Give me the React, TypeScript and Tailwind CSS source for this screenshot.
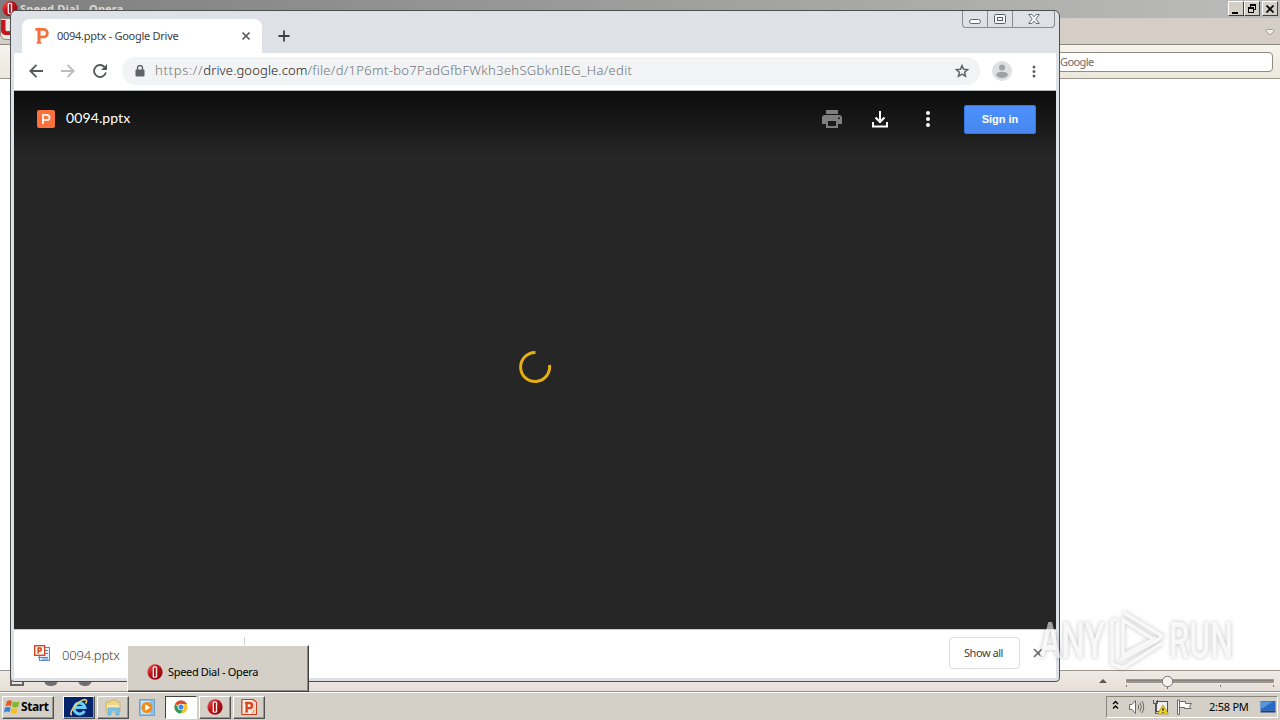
import type { ReactNode } from 'react';
import clsx from 'clsx';

const UI_FONT = "font-['Noto_Sans','Liberation_Sans',sans-serif]";

function OperaIcon({ className }: { className?: string }) {
  return (
    <svg viewBox="0 0 16 16" className={className}>
      <defs>
        <linearGradient id="opera" x1="0" y1="0" x2="1" y2="1">
          <stop offset="0" stopColor="#ef6b6b" />
          <stop offset="0.4" stopColor="#c4161c" />
          <stop offset="1" stopColor="#7d0308" />
        </linearGradient>
      </defs>
      <ellipse cx="8" cy="8" rx="7.6" ry="7.8" fill="url(#opera)" />
      <rect x="5.6" y="2.2" width="4.6" height="11.6" rx="1.6" fill="#f6e9e9" />
      <rect x="7" y="3.4" width="1.8" height="9.4" rx="0.8" fill="#a30d12" />
    </svg>
  );
}

function PowerPointIcon({ className }: { className?: string }) {
  return (
    <svg viewBox="0 0 16 16" className={className}>
      <path d="M1 0.5H12L15.5 3V15.5H1Z" fill="#f6d4c6" stroke="#c8401a" />
      <path d="M1 1H10V15H1Z" fill="#fdf1ec" />
      <path d="M1 0.5H12L15.5 3V15.5H1Z" fill="none" stroke="#c8401a" />
      <path d="M5.6 13V4H8.4A2.6 2.6 0 0 1 8.4 9.2H5.6" fill="none" stroke="#d8441b" strokeWidth="2.3" />
      <path d="M3.8 13H7.4M3.8 3.9H6" stroke="#d8441b" strokeWidth="1.2" />
      <path d="M11.5 14 13.5 11" stroke="#e58a6c" />
    </svg>
  );
}

function ClassicButton({ children }: { children: ReactNode }) {
  return (
    <div className="flex h-[15px] w-4 items-center justify-center border border-t-white border-r-[#404040] border-b-[#404040] border-l-white bg-[#d4d0c8]">
      {children}
    </div>
  );
}

function TaskButton({ children, active, className }: { children: ReactNode; active?: boolean; className?: string }) {
  return (
    <div
      className={clsx(
        'flex h-[23px] w-8 items-center justify-center border',
        active
          ? 'border-t-[#404040] border-r-white border-b-white border-l-[#404040] bg-white'
          : 'border-t-white border-r-[#505050] border-b-[#505050] border-l-white shadow-[inset_-1px_-1px_#9a968f]',
        className,
      )}
    >
      {children}
    </div>
  );
}

function OperaWindow() {
  return (
    <div className="flex h-[692px] flex-col bg-white">
      {/* Title bar */}
      <div className="flex h-[18px] items-start justify-between overflow-hidden bg-linear-to-r from-[#7f7f7f] to-[#bcbcba]">
        <div className="flex">
          <OperaIcon className="ml-0.5 h-[17px] w-4" />
          <span className="ml-0.5 text-[11px] leading-[17px] font-bold tracking-[0.2px] text-[#dcd9d2]">Speed Dial - Opera</span>
        </div>
        <div className="mt-px mr-0.5 flex">
          <ClassicButton>
            <span className="mt-2 mr-0.5 h-0.5 w-1.5 bg-black" />
          </ClassicButton>
          <ClassicButton>
            <svg width="10" height="10" viewBox="0 0 10 10" fill="none" stroke="#000" shapeRendering="crispEdges">
              <path d="M3 1.5H9M3 0.5H9M3.5 1V3M8.5 1V6M7 5.5H9" />
              <path d="M1 4.5H7M1 3.5H7M1.5 4V9M6.5 4V9M1 8.5H7" />
            </svg>
          </ClassicButton>
          <div className="ml-0.5">
            <ClassicButton>
              <svg width="8" height="8" viewBox="0 0 8 8" stroke="#000" strokeWidth="1.7">
                <path d="M0.5 0.5 7.5 7.5M7.5 0.5 0.5 7.5" />
              </svg>
            </ClassicButton>
          </div>
        </div>
      </div>
      {/* Tab bar */}
      <div className="flex h-[27px] items-start justify-between border-b border-[#8d897f] bg-[#d4cec7]">
        <div className="h-[22px] w-9 rounded-bl-md border border-[#8d897f] bg-[#ece8e2]">
          <svg width="12" height="18" viewBox="0 0 12 18">
            <path d="M0 1H4.5V11Q5 13 8 12H12V16H5Q0 16 0 11Z" fill="#c4161c" />
          </svg>
        </div>
        <svg width="10" height="7" viewBox="0 0 10 7" fill="#f0eeea" stroke="#a19c95" className="mt-[11px] mr-[5px]">
          <path d="M0.5 1.5 2.5 0.5H7.5L9.5 1.5 5 6Z" />
        </svg>
      </div>
      {/* Search field */}
      <div className="flex h-[34px] items-center justify-end border-b border-[#9a958a] bg-linear-to-b from-[#f6f4ed] to-[#ebe7dd] pr-[7px]">
        <div className="h-5 w-[240px] rounded border border-[#8f8c84] bg-white pl-[26px] text-[11px] leading-[18px] tracking-[-0.6px] text-[#6b6b6b]">Google</div>
      </div>
      <div className="flex-1" />
      {/* Status bar */}
      <div className="flex h-[22px] items-center justify-between border-t border-b border-[#97938c] bg-linear-to-b from-[#f0ebe5] to-[#e6dfd7]">
        <div className="-mt-1 flex items-start pl-2.5">
          <div className="h-3.5 w-3.5 border-2 border-[#666]" />
          <div className="ml-5 h-3.5 w-3.5 rounded-md bg-[#707070]" />
          <div className="ml-5 h-3.5 w-3.5 rounded-md border-4 border-[#707070]" />
        </div>
        <svg width="182" height="20" viewBox="0 0 182 20">
          <path d="M1 12 5 8 9 12Z" fill="#5b5752" />
          <rect x="28" y="8.5" width="148" height="3.5" rx="1.5" fill="#9b968f" />
          <path d="M28 9H176" stroke="#76716b" />
          <path d="M28.5 14V16M69.5 14V18M122.5 14V16M175.5 14V16" stroke="#77726c" />
          <circle cx="69.5" cy="10.5" r="5.2" fill="#f6f3f0" stroke="#77736e" />
        </svg>
      </div>
    </div>
  );
}

function Taskbar() {
  return (
    <div className="flex h-7 items-center border-t border-white bg-[#d4d0c8] pt-px">
      <div className="ml-0.5 flex h-[23px] w-[52px] items-center border border-t-white border-r-[#505050] border-b-[#505050] border-l-white shadow-[inset_-1px_-1px_#9a968f]">
        <svg width="16" height="15" viewBox="0 0 16 15" className="ml-px">
          <path d="M3 1Q6 -0.3 8 1L7 6Q4 5 1.5 6.5Z" fill="#e85a21" />
          <path d="M9 1.5Q12 3 15.5 1.5L14 7Q11 8 8 6.5Z" fill="#7fb928" />
          <path d="M1 7.7Q4 6.2 6.7 7.5L5.6 12Q3 11 0 12.5Z" fill="#2f82d8" />
          <path d="M7.8 8Q11 9.5 14 8.2L12.5 13Q9.5 14.5 6.5 12.5Z" fill="#f6bd25" />
        </svg>
        <span className="ml-px text-[12px] leading-none font-bold tracking-[-0.4px] text-black">Start</span>
      </div>

      <TaskButton className="ml-[9px] bg-[#03246c]">
        <svg width="30" height="21" viewBox="0 0 30 21" fill="none">
          <path d="M20.5 14A5.5 5.5 0 1 1 21 10.5H11" stroke="#6ccdf8" strokeWidth="3" />
          <path d="M8 18Q5 17 10 10Q16 3 21 2.5Q24 3 21.5 6.5" stroke="#f0d45e" strokeWidth="1.5" />
        </svg>
      </TaskButton>
      <TaskButton className="ml-0.5">
        <svg width="18" height="17" viewBox="0 0 18 17">
          <path d="M2 3H6L7 1H12L13 3H16V13H2Z" fill="#efd68b" stroke="#c9a94e" strokeWidth="0.7" />
          <path d="M3 6H15V13H3Z" fill="#f7e9b5" />
          <path d="M4 9H15V16H12V12H7V16H4Z" fill="#7cc4e8" stroke="#5ba3cb" strokeWidth="0.7" />
        </svg>
      </TaskButton>
      <svg width="16" height="17" viewBox="0 0 16 17" className="ml-2.5">
        <rect x="0.5" y="0.5" width="15" height="16" fill="#8fc0e8" stroke="#6fa3cf" />
        <rect x="2" y="2" width="9" height="13" fill="#c5e0f5" />
        <circle cx="8" cy="8.5" r="5.5" fill="#ef8b16" />
        <path d="M6.2 5.2 11.3 8.5 6.2 11.8Z" fill="#fff" />
      </svg>
      <TaskButton active className="ml-2.5">
        <svg width="14" height="14" viewBox="0 0 16 16" className="-ml-px">
          <circle cx="8" cy="8" r="7.5" fill="#f5c32c" />
          <path d="M8 8 1.5 4.2A7.5 7.5 0 0 1 14.7 4.6L8 4.6Z" fill="#dc4437" />
          <path d="M1.5 4.2A7.5 7.5 0 0 0 7.5 15.5L11 9.8 5 9.8Z" fill="#2a9c57" />
          <circle cx="8" cy="8" r="3.7" fill="#fff" />
          <circle cx="8" cy="8" r="2.9" fill="#4384ef" />
        </svg>
      </TaskButton>
      <TaskButton className="ml-0.5">
        <OperaIcon className="-ml-px h-4 w-4" />
      </TaskButton>
      <TaskButton className="ml-0.5">
        <PowerPointIcon className="h-4 w-4" />
      </TaskButton>

      {/* Tray */}
      <div className="mr-0.5 ml-auto flex h-[22px] w-[172px] items-center border border-t-[#8a867e] border-r-white border-b-white border-l-[#8a867e]">
        <svg width="7" height="10" viewBox="0 0 7 10" fill="none" stroke="#000" strokeWidth="1.4" className="-mt-1 ml-[5px]">
          <path d="M1 4 3.5 1.5 6 4M1 8.5 3.5 6 6 8.5" />
        </svg>
        <svg width="17" height="16" viewBox="0 0 17 16" fill="none" stroke="#6d6a66" className="ml-[9px]">
          <path d="M1.5 5.5H4L7.5 1.5V14.5L4 10.5H1.5Z" fill="#fff" />
          <path d="M10 5.5Q11.5 8 10 10.5M12 3.5Q14.5 8 12 12.5M14 2Q17.5 8 14 14" />
        </svg>
        <svg width="17" height="16" viewBox="0 0 17 16" className="ml-[7px]">
          <rect x="4.5" y="2.5" width="11" height="10" fill="#eee" stroke="#55524d" />
          <path d="M1.5 1V4.5H5.5V1M3.5 4.5V14.5H7" fill="none" stroke="#55524d" />
          <path d="M11 6 16.5 15H5.5Z" fill="#f7d51d" stroke="#a58a10" strokeWidth="0.7" />
          <path d="M11 9V12M11 13V14" stroke="#222" strokeWidth="1.2" />
        </svg>
        <svg width="17" height="16" viewBox="0 0 17 16" fill="#fff" stroke="#6d6a66" className="ml-[7px]">
          <path d="M1.5 1V15.5H3.5V1ZM3.5 2.5H9.5V4.5H15.5L13.5 7.5 15 9.5H8.5V8.5H3.5Z" />
        </svg>
        <span className="-mt-px ml-4 text-[11px] leading-none tracking-[-0.25px] whitespace-nowrap text-black">2:58 PM</span>
        <svg width="16" height="14" viewBox="0 0 16 14" className="mr-px ml-auto">
          <path d="M0.5 1H15.5V10.5H0.5Z" fill="#2769c6" />
          <path d="M1 1.5H13L3 8H1Z" fill="#5794df" />
          <path d="M0.5 10.5H15.5V12.5H0.5Z" fill="#173d84" />
        </svg>
      </div>
    </div>
  );
}

function TabStrip() {
  return (
    <div className="flex h-[42px] items-end bg-[#dee1e6]">
      <div className="ml-2 flex h-[34px] w-60 items-center rounded-t-lg bg-white pl-[13px]">
        <svg width="14" height="16" viewBox="0 0 14 16" fill="none" stroke="#f76d3b">
          <path d="M4 1.2V14.8" strokeWidth="3" />
          <path d="M0.5 1.4H8.6A3.5 3.5 0 0 1 8.6 9H4" strokeWidth="2.7" />
          <path d="M1.8 14.8H6.2" strokeWidth="1.8" />
        </svg>
        <span className="ml-2 text-[11px] tracking-[-0.27px] whitespace-nowrap text-[#3c4043]">0094.pptx - Google Drive</span>
        <svg width="8" height="8" viewBox="0 0 8 8" stroke="#5f6368" strokeWidth="1.6" className="mr-3 ml-auto">
          <path d="M0.5 0.5 7.5 7.5M7.5 0.5 0.5 7.5" />
        </svg>
      </div>
      <svg width="12" height="12" viewBox="0 0 12 12" stroke="#3c4043" strokeWidth="1.8" className="mb-[11px] ml-4">
        <path d="M6 0.5V11.5M0.5 6H11.5" />
      </svg>
      {/* Window buttons */}
      <div className="mr-px mb-auto ml-auto flex h-[17px] w-[93px] items-center rounded-b border border-t-0 border-[#878b92]">
        <div className="flex h-full w-[25px] items-end justify-center border-r border-[#878b92] pb-[3px]">
          <div className="h-[5px] w-3 rounded-sm border border-[#5d626a] bg-white" />
        </div>
        <div className="flex h-full w-[25px] items-center justify-center border-r border-[#878b92]">
          <svg width="12" height="10" viewBox="0 0 12 10" fill="#f4f5f7" stroke="#5d626a">
            <rect x="0.5" y="0.5" width="11" height="9" rx="1" />
            <rect x="3.5" y="3.5" width="5" height="3" />
          </svg>
        </div>
        <div className="flex flex-1 justify-center">
          <svg width="12" height="10" viewBox="0 0 12 10" fill="#f8f8fa" stroke="#5d626a" strokeWidth="0.9">
            <path d="M0.7 0.5H4L6 2.8 8 0.5H11.3L7.8 5 11.3 9.5H8L6 7.2 4 9.5H0.7L4.2 5Z" />
          </svg>
        </div>
      </div>
    </div>
  );
}

function AddressBar() {
  return (
    <div className="flex h-[38px] items-center border-b border-[#b4b6b9] bg-white">
      <svg width="14" height="14" viewBox="0 0 14 14" fill="none" stroke="#55595e" strokeWidth="1.9" className="-mt-0.5 ml-[15px]">
        <path d="M14 7H1.5M7.5 0.8 1.3 7 7.5 13.2" />
      </svg>
      <svg width="14" height="14" viewBox="0 0 14 14" fill="none" stroke="#babcbe" strokeWidth="1.9" className="-mt-0.5 ml-[18px]">
        <path d="M0 7H12.5M6.5 0.8 12.7 7 6.5 13.2" />
      </svg>
      <svg width="14" height="14" viewBox="0 0 14 14" fill="none" stroke="#55595e" strokeWidth="1.9" className="-mt-0.5 ml-[18px]">
        <path d="M12.9 8.5A6 6 0 1 1 11.4 2.8" />
        <path d="M14 0V6H8Z" fill="#55595e" stroke="none" />
      </svg>
      <div className="-mt-0.5 ml-[15px] flex h-7 w-[858px] items-center rounded-full bg-[#f1f3f4] pl-3">
        <svg width="10" height="12" viewBox="0 0 10 12" className="ml-px">
          <rect x="0.5" y="4.5" width="9" height="7" rx="1" fill="#5f6368" />
          <path d="M2.5 5V3A2.5 2.5 0 0 1 7.5 3V5" fill="none" stroke="#5f6368" strokeWidth="1.4" />
        </svg>
        <span className="mt-px ml-2.5 text-[13px] font-light tracking-[0.31px] whitespace-nowrap text-[#70757a]">
          <span className="tracking-[0.7px]">https://</span>
          <span className="tracking-[0.13px] text-[#202124]">drive.google.com</span>/file/d/1P6mt-bo7PadGfbFWkh3ehSGbknIEG_Ha/edit
        </span>
        <svg width="14" height="14" viewBox="0 0 14 14" fill="none" stroke="#5f6368" strokeWidth="1.5" className="mr-[11px] ml-auto">
          <path d="M7 1.6 8.6 5.3 12.7 5.6 9.6 8.3 10.5 12.3 7 10.2 3.5 12.3 4.4 8.3 1.3 5.6 5.4 5.3Z" />
        </svg>
      </div>
      <svg width="20" height="20" viewBox="0 0 20 20" className="-mt-0.5 ml-3">
        <circle cx="10" cy="10" r="10" fill="#e0e0e1" />
        <circle cx="10" cy="6.5" r="3" fill="#a0a1a3" />
        <ellipse cx="10" cy="13.8" rx="5.8" ry="3.1" fill="#a0a1a3" />
      </svg>
      <svg width="4" height="13" viewBox="0 0 4 13" fill="#5f6368" className="ml-5">
        <circle cx="2" cy="2" r="1.5" />
        <circle cx="2" cy="6.5" r="1.5" />
        <circle cx="2" cy="11" r="1.5" />
      </svg>
    </div>
  );
}

function DriveViewer() {
  return (
    <div className="flex h-[538px] flex-col bg-[#262626]">
      <div className="flex h-16 items-center bg-linear-to-b from-[#0c0c0c] to-[#262626] pb-2">
        <div className="ml-[23px] flex h-[18px] w-[18px] items-center justify-center rounded-xs bg-[#fb713d]">
          <svg width="10" height="10" viewBox="0 0 10 10" fill="none" stroke="#ffe9e0" strokeWidth="2">
            <path d="M2 10V1H6A2.4 2.4 0 0 1 6 6H2" />
          </svg>
        </div>
        <span className="-mt-0.5 ml-[11px] font-['Lato','Noto_Sans',sans-serif] text-[14px] leading-none tracking-[0.1px] text-white">0094.pptx</span>
        <svg width="20" height="18" viewBox="0 0 20 18" fill="#7f7f7f" className="ml-auto">
          <path d="M4 0H16V4H4Z" />
          <path fillRule="evenodd" d="M3 5H17A3 3 0 0 1 20 8V14H16V18H4V14H0V8A3 3 0 0 1 3 5ZM6 11V16H14V11ZM17 7.2A1 1 0 1 0 17 9.2A1 1 0 1 0 17 7.2Z" />
        </svg>
        <svg width="16" height="17" viewBox="0 0 16 17" fill="none" stroke="#fff" strokeWidth="2" className="ml-[30px]">
          <path d="M8 0V10M3.5 6.5 8 11 12.5 6.5M1 11V15.5H15V11" />
        </svg>
        <svg width="4" height="16" viewBox="0 0 4 16" fill="#fff" className="ml-[38px]">
          <circle cx="2" cy="2" r="2" />
          <circle cx="2" cy="8" r="2" />
          <circle cx="2" cy="14" r="2" />
        </svg>
        <div className="mr-5 ml-[34px] flex h-[29px] w-[72px] items-center justify-center rounded-xs border border-[#3079ed] bg-linear-to-b from-[#4d90fe] to-[#4787ed] font-['Liberation_Sans',sans-serif] text-[11px] font-bold text-white">
          Sign in
        </div>
      </div>
      <div className="flex flex-1 justify-center pt-[195px]">
        <svg width="34" height="34" viewBox="0 0 34 34" fill="none" stroke="#e3b010" strokeWidth="3">
          <path d="M17.5 2.5A14.5 14.5 0 1 0 31.5 15" />
        </svg>
      </div>
    </div>
  );
}

function DownloadShelf() {
  return (
    <div className="flex h-[49px] items-center border-t border-[#c8cacd] bg-white pb-0.5">
      <svg width="16" height="17" viewBox="0 0 16 17" className="ml-5">
        <rect x="5.5" y="2.5" width="10" height="13" fill="#e4eefb" stroke="#5e88c2" />
        <path d="M11 5.5H14M11 8.5H14M4 12.5H14M8 14H14" stroke="#5e88c2" />
        <rect x="0.7" y="0.7" width="10" height="9.6" fill="#fff4ef" stroke="#cf4b28" strokeWidth="1.4" />
        <path d="M4.2 8.5V3H6.2A1.6 1.6 0 0 1 6.2 6H4.2" fill="none" stroke="#d14419" strokeWidth="1.5" />
      </svg>
      <span className="mt-[5px] ml-3 text-[13px] font-light tracking-[-0.2px] text-[#3c4043]">0094.pptx</span>
      <div className="ml-[124px] h-8 w-px bg-[#d0d1d3]" />
      <div className="mr-[13px] ml-auto flex h-8 w-[71px] items-center justify-center rounded border border-[#dadce0] pr-0.5 text-[11px] tracking-[-0.45px] text-[#3c4043]">
        Show all
      </div>
      <svg width="10" height="10" viewBox="0 0 10 10" stroke="#666a6e" strokeWidth="1.7" className="mr-[13px]">
        <path d="M1 1 9 9M9 1 1 9" />
      </svg>
    </div>
  );
}

function Watermark() {
  return (
    <svg width="244" height="76" viewBox="0 0 244 76" className="absolute top-[608px] left-[1036px] opacity-60 drop-shadow-[0_0_2px_rgba(0,0,0,0.4)]">
      <g fill="#f4f4f4" fontFamily="Roboto, sans-serif" fontSize="50" fontWeight="500">
        <text x="3" y="50" textLength="66" lengthAdjust="spacingAndGlyphs">ANY</text>
        <text x="133" y="50" textLength="64" lengthAdjust="spacingAndGlyphs">RUN</text>
      </g>
      <g fill="none" stroke="#f4f4f4" strokeWidth="3.5">
        <path d="M87 4 126 28 120 33 87 12V47L120 30" />
        <path d="M81 11 76 13V56L87 60 126 35" />
        <path d="M84 52 120 33" />
      </g>
    </svg>
  );
}

export default function App() {
  return (
    <div className={clsx('relative h-[720px] w-[1280px] overflow-hidden', UI_FONT)}>
      <OperaWindow />
      <Taskbar />

      {/* Chrome window over the Opera one */}
      <div className="absolute top-2.5 left-2.5 h-[672px] w-[1050px] overflow-hidden rounded-t-md rounded-b border border-[#4c4e51] bg-[#dee1e6] px-[3px] pb-[3px]">
        <TabStrip />
        <AddressBar />
        <DriveViewer />
        <DownloadShelf />
      </div>

      {/* Taskbar group popup */}
      <div className="absolute top-[645px] left-[127px] flex h-[47px] w-[182px] items-center border border-t-white border-r-[#404040] border-b-[#404040] border-l-white bg-[#d4d0c8] pt-[7px] pl-[19px] shadow-[inset_-1px_-1px_#8c8880]">
        <OperaIcon className="h-4 w-4" />
        <span className="ml-[5px] text-[11px] tracking-[-0.33px] whitespace-nowrap text-black">Speed Dial - Opera</span>
      </div>

      <Watermark />
    </div>
  );
}
